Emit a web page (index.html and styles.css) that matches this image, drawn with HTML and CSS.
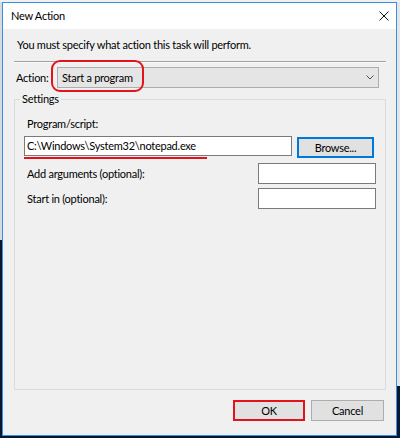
FILE: index.html
```html
<!DOCTYPE html>
<html lang="en">
<head>
    <meta charset="UTF-8">
    <meta name="viewport" content="width=device-width, initial-scale=1.0">
    <title>New Action</title>
    <link rel="stylesheet" href="styles.css">
</head>
<body>
    <div class="window">
        <div class="titlebar">
            <span class="title">New Action</span>
            <svg class="close-icon" width="10" height="10" viewBox="0 0 10 10">
                <path d="M0.5 0.5 L9.5 9.5 M9.5 0.5 L0.5 9.5" stroke="#111" stroke-width="1" fill="none"/>
            </svg>
        </div>
        <div class="content">
            <p class="intro">You must specify what action this task will perform.</p>
            <div class="separator"></div>

            <div class="action-row">
                <span class="action-label">Action:</span>
                <div class="combo">
                    <span>Start a program</span>
                    <svg class="chevron" width="8" height="5" viewBox="0 0 8 5">
                        <polyline points="0.5,0.5 4,4 7.5,0.5" stroke="#555" stroke-width="1" fill="none"/>
                    </svg>
                    <!-- red highlight around the chosen action -->
                    <span class="mark-ring"></span>
                </div>
            </div>

            <fieldset class="settings">
                <legend>Settings</legend>
                <div class="field-label">Program/script:</div>
                <div class="program-row">
                    <div class="text-input program-input">
                        C:\Windows\System32\notepad.exe
                        <span class="mark-underline"></span>
                    </div>
                    <button class="btn browse-btn">Browse...</button>
                </div>
                <div class="option-row">
                    <span class="option-label">Add arguments (optional):</span>
                    <div class="text-input small-input"></div>
                </div>
                <div class="option-row">
                    <span class="option-label">Start in (optional):</span>
                    <div class="text-input small-input"></div>
                </div>
            </fieldset>

            <div class="buttons">
                <button class="btn ok-btn">OK</button>
                <button class="btn cancel-btn">Cancel</button>
            </div>
        </div>
    </div>
</body>
</html>
```

FILE: styles.css
```css
body {
    margin: 0;
    width: 400px;
    height: 438px;
    overflow: hidden;
    font-family: Lato, "Noto Sans", sans-serif;
    font-size: 11px;
    letter-spacing: -0.25px;
    color: #000;
    background:
        linear-gradient(#eef0f2, #eef0f2) left top / 100% 2px no-repeat,
        linear-gradient(#d4dbe3, #d4dbe3) left top / 2px 240px no-repeat,
        linear-gradient(#e4e6e8, #e4e6e8) right top / 3px 386px no-repeat,
        #06182f;
}
.window {
    box-sizing: border-box;
    width: 395px;
    height: 434px;
    margin: 2px 0 0 2px;
    border: 1px solid #3a8ee0;
    background-color: #f0f0f0;
    display: flex;
    flex-direction: column;
}
.titlebar {
    height: 26px;
    flex: none;
    background-color: #fff;
    display: flex;
    align-items: center;
    justify-content: space-between;
    padding: 0 7px 0 8px;
}
.title {
    line-height: 16px;
}
.close-icon {
    display: block;
}
.content {
    flex: 1;
    display: flex;
    flex-direction: column;
    padding: 8px 10px 14px 11px;
    min-height: 0;
}
.intro {
    margin: 0;
    padding-left: 3px;
    line-height: 16px;
}
.separator {
    margin-top: 8px;
    border-top: 1px solid #a0a0a0;
    border-bottom: 1px solid #fcfcfc;
}
.action-row {
    margin-top: 4px;
    display: flex;
    align-items: center;
}
.action-label {
    width: 41px;
    padding-left: 2px;
}
.combo {
    position: relative;
    flex: 1;
    box-sizing: border-box;
    height: 21px;
    margin-right: 7px;
    border: 1px solid #adadad;
    background-color: #e5e5e5;
    display: flex;
    align-items: center;
    justify-content: space-between;
    padding: 0 4px 0 4px;
}
.chevron {
    display: block;
}
.mark-ring {
    position: absolute;
    left: -7px;
    top: -8px;
    width: 89px;
    height: 28px;
    border: 2px solid #e4131b;
    border-radius: 9px;
}

/* Settings group */
.settings {
    flex: 1;
    margin: 3px 0 0;
    padding: 0 9px 0 9px;
    border: 1px solid #dcdcdc;
    min-width: 0;
}
.settings legend {
    margin-left: -4px;
    padding: 0 2px;
    line-height: 16px;
}
.field-label {
    margin-top: 9px;
    padding-left: 3px;
    line-height: 16px;
}
.program-row {
    margin-top: 4px;
    display: flex;
    align-items: flex-start;
    gap: 5px;
}
.text-input {
    box-sizing: border-box;
    height: 21px;
    border: 1px solid #7a7a7a;
    background-color: #fff;
}
.program-input {
    position: relative;
    width: 268px;
    height: 20px;
    padding-left: 2px;
    line-height: 18px;
    white-space: nowrap;
}
.mark-underline {
    position: absolute;
    left: -1px;
    top: 20px;
    width: 183px;
    height: 2px;
    background-color: #e4131b;
}
.option-row {
    margin-top: 5px;
    display: flex;
    align-items: center;
    justify-content: space-between;
}
.option-row + .option-row {
    margin-top: 4px;
}
.option-label {
    padding-left: 3px;
}
.small-input {
    width: 118px;
}

/* Buttons */
.btn {
    box-sizing: border-box;
    height: 21px;
    padding: 0;
    font-family: inherit;
    font-size: inherit;
    letter-spacing: inherit;
    color: #000;
    background-color: #e1e1e1;
    border: 1px solid #adadad;
}
.browse-btn {
    width: 77px;
    margin-top: 1px;
    margin-right: 1px;
    border: 2px solid #0078d7;
}
.buttons {
    margin-top: 10px;
    display: flex;
    justify-content: flex-end;
    gap: 6px;
    padding-right: 2px;
}
.ok-btn {
    width: 72px;
    border: 2px solid #e4131b;
}
.cancel-btn {
    width: 73px;
}
```
